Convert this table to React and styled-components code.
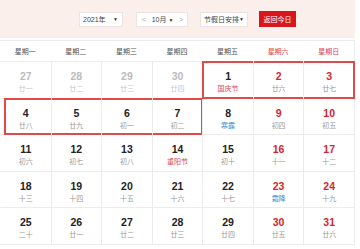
import React from 'react';
import styled, { createGlobalStyle } from 'styled-components';

//------------------ Styles ----------------------

const GlobalStyle = createGlobalStyle`
  body {
    margin: 0;
    background: #fff;
    font-family: 'Liberation Sans', 'Noto Sans CJK SC', sans-serif;
  }
`;

const Calendar = styled.div`
  width: 355px;
`;

const Toolbar = styled.div`
  height: 38px;
  background: #fbefec;
  display: flex;
  align-items: center;
  padding-left: 79px;
  box-sizing: border-box;
`;

const Select = styled.div`
  height: 15px;
  width: ${props => props.w}px;
  margin-right: ${props => props.mr}px;
  box-sizing: border-box;
  padding: 0 4px 0 3px;
  background: #fff;
  border: 1px solid #eee3e1;
  display: flex;
  align-items: center;
  justify-content: space-between;
  white-space: nowrap;
  font-size: 7px;
  color: #444;
`;

const Caret = styled.span`
  font-size: 5px;
  color: #333;
`;

const MonthGroup = styled.div`
  height: 15px;
  width: 52px;
  margin-right: 12px;
  box-sizing: border-box;
  background: #fff;
  border: 1px solid #eee3e1;
  display: flex;
  align-items: center;
  justify-content: space-between;
  padding: 0 4px 0 5px;
  white-space: nowrap;
  font-size: 7px;
  color: #444;
`;

const Arrow = styled.span`
  color: #aaa;
  font-size: 7px;
`;

const TodayButton = styled.div`
  height: 16px;
  width: 37px;
  background: #d9161b;
  color: #fff;
  font-size: 7px;
  white-space: nowrap;
  display: flex;
  align-items: center;
  justify-content: center;
`;

const Grid = styled.div`
  display: grid;
  grid-template-columns: repeat(7, 1fr);
  border-right: 1px solid #ececec;
`;

const WeekRow = styled(Grid)`
  margin-top: 2px;
  border-top: 1px solid #ececec;
  border-bottom: 1px solid #ececec;
  height: 22px;
  box-sizing: border-box;
`;

const WeekName = styled.div`
  display: flex;
  align-items: center;
  justify-content: center;
  font-size: 7px;
  color: ${props => (props.$weekend ? '#e0474c' : '#555')};
`;

const Days = styled(Grid)`
  grid-auto-rows: 36.5px;
`;

const Cell = styled.div`
  position: relative;
  border-left: 1px solid ${props => (props.$first ? 'transparent' : '#ececec')};
  border-bottom: 1px solid #ececec;
  display: flex;
  flex-direction: column;
  align-items: center;
  padding-top: 8px;
  box-sizing: border-box;
`;

const Num = styled.div`
  font-size: 10.5px;
  font-weight: bold;
  line-height: 12px;
  color: ${props => props.color};
`;

const Lunar = styled.div`
  margin-top: 1px;
  font-size: 7px;
  line-height: 10px;
  color: ${props => props.color};
  font-family: 'Noto Sans CJK SC', sans-serif;
`;

const Frame = styled.span`
  position: absolute;
  top: -1px;
  bottom: -1px;
  left: ${props => (props.$l ? (props.$edge ? '3px' : '-1px') : '0')};
  right: ${props => (props.$r ? '-1px' : '0')};
  border-top: 2px solid #e04a4a;
  border-bottom: 2px solid #e04a4a;
  border-left: ${props => (props.$l ? '2px solid #e04a4a' : 'none')};
  border-right: ${props => (props.$r ? '2px solid #e04a4a' : 'none')};
  pointer-events: none;
`;

//------------------ Data -------------------------

const WEEK = ['星期一', '星期二', '星期三', '星期四', '星期五', '星期六', '星期日'];

const lunar = [
  ['廿一', '廿二', '廿三', '廿四', '国庆节', '廿六', '廿七'],
  ['廿八', '廿九', '初一', '初二', '寒露', '初四', '初五'],
  ['初六', '初七', '初八', '重阳节', '初十', '十一', '十二'],
  ['十三', '十四', '十五', '十六', '十七', '霜降', '十九'],
  ['二十', '廿一', '廿二', '廿三', '廿四', '廿五', '廿六'],
];

const FEST = ['国庆节', '重阳节'];
const TERMS = ['寒露', '霜降'];

const frames = {
  '0-4': { l: true },
  '0-5': {},
  '0-6': { r: true },
  '1-0': { l: true, edge: true },
  '1-1': {},
  '1-2': {},
  '1-3': { r: true },
};

const days = lunar.flatMap((row, r) =>
  row.map((text, c) => {
    const idx = r * 7 + c;
    const prev = idx < 4;
    const num = prev ? 27 + idx : idx - 3;
    let numColor = c >= 5 ? '#d6262b' : '#222';
    let lunarColor = '#999';
    if (prev) {
      numColor = '#bbb';
      lunarColor = '#c8c8c8';
    }
    if (FEST.includes(text)) lunarColor = '#e0474c';
    if (TERMS.includes(text)) lunarColor = '#3d8fcf';
    return { key: idx, r, c, num, text, numColor, lunarColor };
  })
);

//------------------ Component --------------------

const App = () => (
  <>
    <GlobalStyle />
    <Calendar>
      <Toolbar>
        <Select w={44} mr={13}>
          <span>2021年</span>
          <Caret>▼</Caret>
        </Select>
        <MonthGroup>
          <Arrow>&lt;</Arrow>
          <span>
            10月 <Caret>▼</Caret>
          </span>
          <Arrow>&gt;</Arrow>
        </MonthGroup>
        <Select w={48} mr={11}>
          <span>节假日安排</span>
          <Caret>▼</Caret>
        </Select>
        <TodayButton>返回今日</TodayButton>
      </Toolbar>

      <WeekRow>
        {WEEK.map((w, i) => (
          <WeekName key={w} $weekend={i >= 5}>
            {w}
          </WeekName>
        ))}
      </WeekRow>

      <Days>
        {days.map(d => {
          const f = frames[`${d.r}-${d.c}`];
          return (
            <Cell key={d.key} $first={d.c === 0}>
              <Num color={d.numColor}>{d.num}</Num>
              <Lunar color={d.lunarColor}>{d.text}</Lunar>
              {f && <Frame $l={f.l} $r={f.r} $edge={f.edge} />}
            </Cell>
          );
        })}
      </Days>
    </Calendar>
  </>
);

export default App;
